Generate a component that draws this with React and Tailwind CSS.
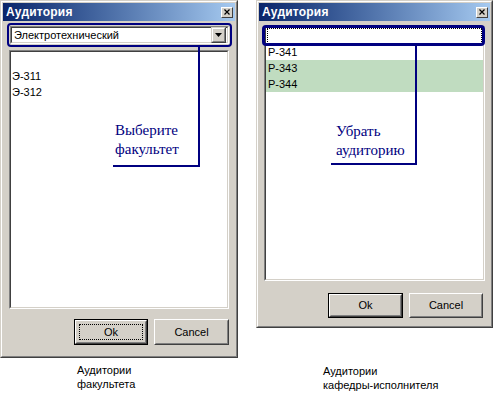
import React from "react";

const SANS = "font-['Liberation_Sans',Arial,sans-serif]";

function TitleBar() {
  return (
    <div className="h-[18px] flex items-center justify-between bg-gradient-to-r from-[#0a246a] to-[#a6caf0] pl-[3px] pr-[2px]">
      <span className={`${SANS} text-[12px] font-bold text-white leading-none tracking-[0.2px]`}>Аудитория</span>
      <div className="w-[12px] h-[11px] bg-[#d4d0c8] border border-t-white border-l-white border-r-[#404040] border-b-[#404040] flex items-center justify-center">
        <svg width="6" height="6" viewBox="0 0 6 6">
          <path d="M0.5 0.5 L5.5 5.5 M5.5 0.5 L0.5 5.5" stroke="#000" strokeWidth="1.2" />
        </svg>
      </div>
    </div>
  );
}

function Button({ label, isDefault, focused, w = "w-[75px]", h = "h-[25px]" }) {
  const inner = (
    <div className="h-full w-full border border-t-white border-l-white border-r-[#404040] border-b-[#404040]">
      <div className="h-full w-full border border-t-[#d4d0c8] border-l-[#d4d0c8] border-r-[#808080] border-b-[#808080] p-[2px]">
        <div className={`h-full w-full flex items-center justify-center border border-dotted ${focused ? "border-black" : "border-transparent"}`}>
          <span className={`${SANS} text-[11px] text-black leading-none`}>{label}</span>
        </div>
      </div>
    </div>
  );
  return (
    <div className={`${w} ${h} bg-[#d4d0c8] ${isDefault ? "border border-black" : ""}`}>{inner}</div>
  );
}

function Sunken({ className = "", children }) {
  return (
    <div className={`border border-t-[#808080] border-l-[#808080] border-r-white border-b-white ${className}`}>
      <div className="h-full w-full border border-t-[#404040] border-l-[#404040] border-r-[#d4d0c8] border-b-[#d4d0c8] bg-white">
        {children}
      </div>
    </div>
  );
}

function Annotation({ lines, vLeft, vTop, vH, hLeft, hTop, hW, tLeft, tTop }) {
  return (
    <>
      <div className="absolute w-[2px] bg-[#000080]" style={{ left: vLeft, top: vTop, height: vH }} />
      <div className="absolute h-[2px] bg-[#000080]" style={{ left: hLeft, top: hTop, width: hW }} />
      <div
        className="absolute font-serif text-[15px] leading-[19px] text-[#000080]"
        style={{ left: tLeft, top: tTop }}
      >
        {lines.map((l) => (
          <div key={l}>{l}</div>
        ))}
      </div>
    </>
  );
}

function Window({ w, h, children }) {
  return (
    <div
      className="relative bg-[#d4d0c8] border border-t-[#d4d0c8] border-l-[#d4d0c8] border-r-[#404040] border-b-[#404040]"
      style={{ width: w, height: h }}
    >
      <div className="h-full w-full border border-t-white border-l-white border-r-[#808080] border-b-[#808080] p-px flex flex-col">
        <TitleBar />
        {children}
      </div>
    </div>
  );
}

function LeftDialog() {
  return (
    <div className="relative">
      <Window w={238} h={358}>
        <div className="mt-[2px] ml-[4px] mr-[3px] h-[24px] border-[2px] border-[#000080] rounded-[4px] p-px">
          <Sunken className="h-full">
            <div className="h-full flex items-center justify-between pl-[2px] pr-px">
              <span className={`${SANS} text-[11px] text-black leading-none`}>Электротехнический</span>
              <div className="w-[15px] h-[16px] bg-[#d4d0c8] border border-t-[#d4d0c8] border-l-[#d4d0c8] border-r-[#404040] border-b-[#404040]">
                <div className="h-full w-full border border-t-white border-l-white border-r-[#808080] border-b-[#808080] flex items-center justify-center">
                  <svg width="7" height="4" viewBox="0 0 7 4">
                    <path d="M0 0 H7 L3.5 4 Z" fill="#000" />
                  </svg>
                </div>
              </div>
            </div>
          </Sunken>
        </div>
        <Sunken className="mt-[3px] ml-[6px] mr-[6px] h-[259px]">
          <div className={`${SANS} text-[11px] text-black pl-px`}>
            <div className="h-[16px]" />
            <div className="h-[16px] flex items-center">Э-311</div>
            <div className="h-[16px] flex items-center">Э-312</div>
          </div>
        </Sunken>
        <div className="mt-[10px] mr-[6px] flex justify-end gap-[6px]">
          <Button label="Ok" isDefault focused w="w-[74px]" h="h-[26px]" />
          <Button label="Cancel" w="w-[75px]" h="h-[26px]" />
        </div>
      </Window>
      <Annotation
        lines={["Выберите", "факультет"]}
        vLeft={198}
        vTop={47}
        vH={120}
        hLeft={113}
        hTop={165}
        hW={87}
        tLeft={115}
        tTop={121}
      />
    </div>
  );
}

function RightDialog() {
  return (
    <div className="relative">
      <Window w={237} h={328}>
        <div className="relative mt-[5px] ml-[5px] mr-[5px] h-[255px]">
          <Sunken className="h-full">
            <div className={`${SANS} text-[11px] text-black`}>
              <div className="h-[16px] border border-dotted border-black mx-px" />
              <div className="h-[16px] flex items-center pl-[2px]">Р-341</div>
              <div className="h-[16px] flex items-center pl-[2px] bg-[#c0dcc0]">Р-343</div>
              <div className="h-[16px] flex items-center pl-[2px] bg-[#c0dcc0]">Р-344</div>
            </div>
          </Sunken>
          <div className="absolute left-[-2px] top-[-1px] right-0 h-[21px] border-[3px] border-[#000080] rounded-[4px]" />
        </div>
        <div className="mt-[12px] mr-[7px] flex justify-end gap-[6px]">
          <Button label="Ok" isDefault w="w-[75px]" h="h-[25px]" />
          <Button label="Cancel" w="w-[74px]" h="h-[25px]" />
        </div>
      </Window>
      <Annotation
        lines={["Убрать", "аудиторию"]}
        vLeft={159}
        vTop={46}
        vH={119}
        hLeft={75}
        hTop={163}
        hW={86}
        tLeft={80}
        tTop={122}
      />
    </div>
  );
}

export default function App() {
  return (
    <div className="w-[493px] h-[401px] bg-white flex gap-[18px] overflow-hidden">
      <div className="flex flex-col">
        <LeftDialog />
        <div className={`${SANS} mt-[5px] pl-[77px] text-[11px] leading-[14px] text-black`}>
          <div>Аудитории</div>
          <div>факультета</div>
        </div>
      </div>
      <div className="flex flex-col">
        <RightDialog />
        <div className={`${SANS} mt-[36px] pl-[67px] text-[11px] leading-[14px] text-black`}>
          <div>Аудитории</div>
          <div>кафедры-исполнителя</div>
        </div>
      </div>
    </div>
  );
}
